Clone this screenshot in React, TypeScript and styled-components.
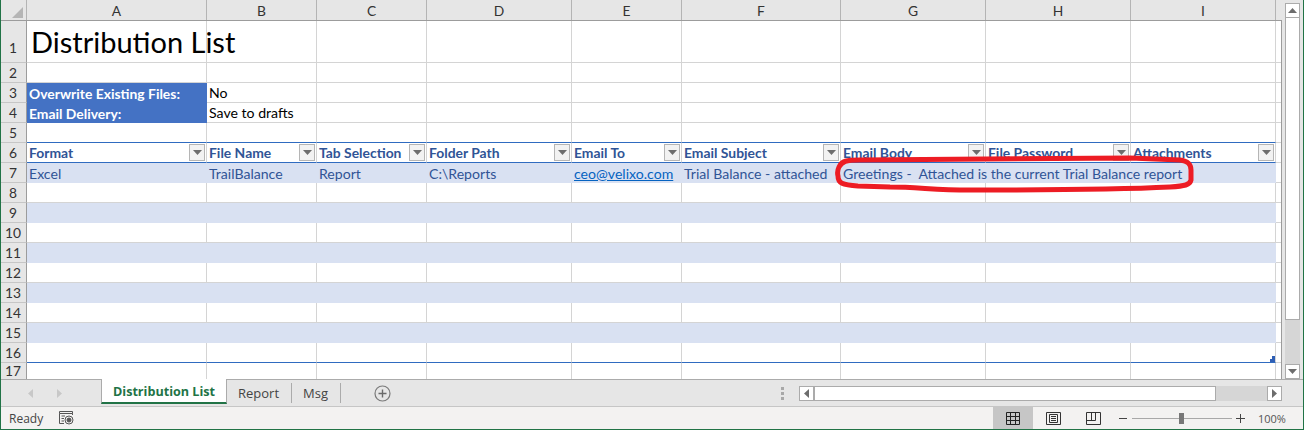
import React from "react";
import styled, { createGlobalStyle } from "styled-components";

const CELL_FONT = `"Lato", "Liberation Sans", sans-serif`;
const UI_FONT = `"Open Sans", "Noto Sans", sans-serif`;
const COLS = "26px 180px 110px 110px 145px 110px 159px 145px 145px 145px 5px";

const GlobalStyle = createGlobalStyle`
  html, body {
    margin: 0;
    padding: 0;
    overflow: hidden;
    background: #e6e6e6;
  }
`;

const LETTERS = ["A", "B", "C", "D", "E", "F", "G", "H", "I"];
const HEADERS = [
  "Format",
  "File Name",
  "Tab Selection",
  "Folder Path",
  "Email To",
  "Email Subject",
  "Email Body",
  "File Password",
  "Attachments",
];
const FIRST_ROW = [
  "Excel",
  "TrailBalance",
  "Report",
  "C:\\Reports",
  "ceo@velixo.com",
  "Trial Balance - attached",
  "Greetings -  Attached is the current Trial Balance report",
  "",
  "",
];

const App = () => {
  return (
    <Frame>
      <GlobalStyle />
      <Workspace>
        <Sheet>
          <ColumnHeaderRow>
            <Corner>
              <svg width="13" height="13" viewBox="0 0 13 13">
                <path d="M12 1V12H1Z" fill="#b5b5b5" />
              </svg>
            </Corner>
            {LETTERS.map((l) => (
              <ColumnLetter key={l}>{l}</ColumnLetter>
            ))}
            <div />
          </ColumnHeaderRow>

          <Row $height={42}>
            <RowNumber $tall>1</RowNumber>
            <Cell>
              <Title>Distribution List</Title>
            </Cell>
            {LETTERS.slice(1).map((l) => (
              <Cell key={l} />
            ))}
            <EdgeCell />
          </Row>

          <PlainRow n={2} />

          <Row $height={20}>
            <RowNumber>3</RowNumber>
            <LabelCell>Overwrite Existing Files:</LabelCell>
            <Cell>No</Cell>
            {LETTERS.slice(2).map((l) => (
              <Cell key={l} />
            ))}
            <EdgeCell />
          </Row>
          <Row $height={20}>
            <RowNumber>4</RowNumber>
            <LabelCell>Email Delivery:</LabelCell>
            <Cell>Save to drafts</Cell>
            {LETTERS.slice(2).map((l) => (
              <Cell key={l} />
            ))}
            <EdgeCell />
          </Row>

          <PlainRow n={5} blueBottom />

          <Row $height={20}>
            <RowNumber>6</RowNumber>
            {HEADERS.map((h) => (
              <TableHeadCell key={h}>
                <span>{h}</span>
                <FilterButton>
                  <svg width="9" height="5" viewBox="0 0 9 5">
                    <path d="M0 0H9L4.5 5Z" fill="#6d6d6d" />
                  </svg>
                </FilterButton>
              </TableHeadCell>
            ))}
            <EdgeCell />
          </Row>

          <Row $height={20}>
            <RowNumber>7</RowNumber>
            {FIRST_ROW.map((v, i) => (
              <BandCell key={i} $over={v.length > 30}>
                {v.includes("@") ? <MailLink>{v}</MailLink> : v}
              </BandCell>
            ))}
            <EdgeCell />
          </Row>

          {[8, 9, 10, 11, 12, 13, 14, 15, 16].map((n) =>
            n % 2 === 1 ? (
              <Row key={n} $height={20}>
                <RowNumber>{n}</RowNumber>
                {LETTERS.map((l) => (
                  <BandCell key={l} />
                ))}
                <EdgeCell />
              </Row>
            ) : (
              <PlainRow key={n} n={n} blueBottom={n === 16} handle={n === 16} />
            )
          )}
          <PlainRow n={17} short />

          <Highlight width="370" height="50" viewBox="0 0 370 50">
            <path
              d="M9 17C12 11 16 10 30 10C100 10 200 8 300 8L350 10C358 11 361 14 361 20L361 30C360 35 355 36 340 37C280 40 180 40 150 40C110 41 90 37 60 37L28 36C12 35 8 33 8 26C7 22 8 19 9 17Z"
              fill="none"
              stroke="#ed1c24"
              strokeWidth="5"
            />
          </Highlight>
        </Sheet>

        <VerticalBar>
          <ScrollButton>
            <svg width="9" height="5" viewBox="0 0 9 5">
              <path d="M0 5H9L4.5 0Z" fill="#6d6d6d" />
            </svg>
          </ScrollButton>
          <VerticalThumb />
          <VerticalTrack />
          <ScrollButton>
            <svg width="9" height="5" viewBox="0 0 9 5">
              <path d="M0 0H9L4.5 5Z" fill="#6d6d6d" />
            </svg>
          </ScrollButton>
        </VerticalBar>
      </Workspace>

      <TabBar>
        <TabNav>
          <svg width="5" height="9" viewBox="0 0 5 9">
            <path d="M5 0V9L0 4.5Z" fill="#c8c8c8" />
          </svg>
          <svg width="5" height="9" viewBox="0 0 5 9">
            <path d="M0 0V9L5 4.5Z" fill="#c8c8c8" />
          </svg>
        </TabNav>
        <ActiveTab>Distribution List</ActiveTab>
        <Tab>Report</Tab>
        <Tab>Msg</Tab>
        <AddSheet>
          <svg width="17" height="17" viewBox="0 0 17 17">
            <circle cx="8.5" cy="8.5" r="7.5" fill="none" stroke="#7a7a7a" strokeWidth="1.2" />
            <path d="M8.5 4.5V12.5M4.5 8.5H12.5" stroke="#6a6a6a" strokeWidth="1.4" />
          </svg>
        </AddSheet>
        <Dots>
          <i />
          <i />
          <i />
        </Dots>
        <HorizontalBar>
          <ScrollButton>
            <svg width="5" height="9" viewBox="0 0 5 9">
              <path d="M5 0V9L0 4.5Z" fill="#6d6d6d" />
            </svg>
          </ScrollButton>
          <HorizontalThumb />
          <HorizontalTrack />
          <ScrollButton>
            <svg width="5" height="9" viewBox="0 0 5 9">
              <path d="M0 0V9L5 4.5Z" fill="#6d6d6d" />
            </svg>
          </ScrollButton>
        </HorizontalBar>
      </TabBar>

      <StatusBar>
        <ReadyText>Ready</ReadyText>
        <MacroIcon>
          <svg width="15" height="14" viewBox="0 0 15 14" fill="none" stroke="#555">
            <path d="M0.5 0.5H13.5V2.5H0.5Z" />
            <path d="M0.5 2.5V12.5H5M13.5 2.5V4" />
            <path d="M2.5 5H6M2.5 7.5H5M2.5 10H5" />
            <circle cx="10" cy="9" r="4" />
            <circle cx="10" cy="9" r="2" fill="#555" />
          </svg>
        </MacroIcon>
        <Spacer />
        <ViewButton $active>
          <svg width="14" height="13" viewBox="0 0 14 13" fill="none" stroke="#222">
            <path d="M0.5 0.5H13.5V12.5H0.5ZM0.5 4.5H13.5M0.5 8.5H13.5M4.5 0.5V12.5M9.5 0.5V12.5" />
          </svg>
        </ViewButton>
        <ViewButton>
          <svg width="15" height="13" viewBox="0 0 15 13" fill="none" stroke="#333">
            <path d="M0.5 0.5H14.5V12.5H0.5ZM3.5 2.5H11.5V10.5H3.5ZM5 4.5H10M5 6.5H10M5 8.5H10" />
          </svg>
        </ViewButton>
        <ViewButton>
          <svg width="15" height="13" viewBox="0 0 15 13" fill="none" stroke="#333">
            <path d="M0.5 0.5H14.5V12.5H0.5ZM0.5 8.5H9.5V0.5M5.5 0.5V8.5" />
          </svg>
        </ViewButton>
        <ZoomBox>
          <ZoomSign>
            <svg width="9" height="9" viewBox="0 0 9 9">
              <path d="M0 4.5H8" stroke="#444" strokeWidth="1" />
            </svg>
          </ZoomSign>
          <ZoomTrack>
            <ZoomThumb />
          </ZoomTrack>
          <ZoomSign>
            <svg width="9" height="9" viewBox="0 0 9 9">
              <path d="M0 4.5H9M4.5 0V9" stroke="#444" strokeWidth="1" />
            </svg>
          </ZoomSign>
          <ZoomValue>100%</ZoomValue>
        </ZoomBox>
      </StatusBar>
    </Frame>
  );
};

const PlainRow = ({
  n,
  blueBottom,
  handle,
  short,
}: {
  n: number;
  blueBottom?: boolean;
  handle?: boolean;
  short?: boolean;
}) => (
  <Row $height={short ? 16 : 20}>
    <RowNumber>{n}</RowNumber>
    {LETTERS.map((l) => (
      <Cell key={l} $blue={blueBottom}>
        {handle && l === "I" ? (
          <ResizeHandle width="5" height="6" viewBox="0 0 5 6">
            <path d="M5 0V6H0V3H2V0Z" fill="#2f5fb5" />
          </ResizeHandle>
        ) : null}
      </Cell>
    ))}
    <EdgeCell />
  </Row>
);

const Frame = styled.div`
  width: 1304px;
  height: 430px;
  box-sizing: border-box;
  border-left: 1px solid #217346;
  border-right: 1px solid #217346;
  border-bottom: 1px solid #217346;
  background: #e6e6e6;
  display: flex;
  flex-direction: column;
  overflow: hidden;
`;

const Workspace = styled.div`
  height: 380px;
  flex: none;
  display: flex;
  box-sizing: border-box;
  border-bottom: 1px solid #ababab;
`;

const Sheet = styled.div`
  position: relative;
  width: 1281px;
  flex: none;
  box-sizing: border-box;
  overflow: hidden;
  font-family: ${CELL_FONT};
  font-size: 14.1px;
  color: #000;
`;

const ColumnHeaderRow = styled.div`
  display: grid;
  grid-template-columns: ${COLS};
  height: 21px;
  box-sizing: border-box;
  background: #e6e6e6;
  border-bottom: 1px solid #9c9c9c;
`;

const Corner = styled.div`
  display: flex;
  align-items: flex-end;
  justify-content: flex-end;
  padding: 0 2px 1px 0;
  border-right: 1px solid #b4b4b4;
  box-sizing: border-box;
`;

const ColumnLetter = styled.div`
  display: flex;
  align-items: center;
  justify-content: center;
  box-sizing: border-box;
  border-right: 1px solid #b4b4b4;
  font-size: 13.8px;
  color: #333;
`;

const Row = styled.div<{ $height: number }>`
  display: grid;
  grid-template-columns: ${COLS};
  height: ${(p) => p.$height}px;
  box-sizing: border-box;
  background: #fff;
  border-right: 1px solid #9c9c9c;
`;

const RowNumber = styled.div<{ $tall?: boolean }>`
  display: flex;
  align-items: center;
  justify-content: center;
  box-sizing: border-box;
  background: #e6e6e6;
  border-right: 1px solid #9c9c9c;
  border-bottom: 1px solid #c6c6c6;
  padding-top: ${(p) => (p.$tall ? "13px" : "0")};
  padding-right: 1px;
  font-size: 13.8px;
  line-height: 16px;
  color: #333;
`;

const Cell = styled.div<{ $blue?: boolean }>`
  position: relative;
  display: flex;
  align-items: center;
  box-sizing: border-box;
  padding-left: 2px;
  white-space: pre;
  border-right: 1px solid #d4d4d4;
  border-bottom: 1px solid ${(p) => (p.$blue ? "#2f6bc0" : "#d4d4d4")};
`;

const EdgeCell = styled.div`
  box-sizing: border-box;
  border-bottom: 1px solid #d4d4d4;
`;

const Title = styled.div`
  font-size: 29px;
  line-height: 36px;
  padding-left: 2px;
  color: #000;
`;

const LabelCell = styled.div`
  display: flex;
  align-items: center;
  box-sizing: border-box;
  padding-left: 2px;
  background: #4472c4;
  color: #fff;
  font-weight: 700;
  font-size: 13.9px;
  white-space: pre;
`;

const TableHeadCell = styled.div`
  position: relative;
  display: flex;
  align-items: center;
  justify-content: space-between;
  box-sizing: border-box;
  padding: 0 1px 0 2px;
  border-right: 1px solid #d4d4d4;
  border-bottom: 1px solid #2f6bc0;
  font-weight: 700;
  font-size: 13.9px;
  color: #305496;
  white-space: pre;
`;

const FilterButton = styled.div`
  width: 16px;
  height: 17px;
  box-sizing: border-box;
  display: flex;
  align-items: center;
  justify-content: center;
  background: #f2f2f2;
  border: 1px solid #b5b5b5;
`;

const BandCell = styled.div<{ $over?: boolean }>`
  position: relative;
  z-index: ${(p) => (p.$over ? 1 : 0)};
  display: flex;
  align-items: center;
  box-sizing: border-box;
  padding-left: 2px;
  background: #d9e1f2;
  color: #305496;
  white-space: pre;
`;

const MailLink = styled.span`
  color: #0563c1;
  text-decoration: underline;
`;

const ResizeHandle = styled.svg`
  position: absolute;
  right: 0;
  bottom: 0;
`;

const Highlight = styled.svg`
  position: absolute;
  z-index: 2;
  left: 829px;
  top: 150px;
`;

const VerticalBar = styled.div`
  width: 15px;
  margin: 3px 0 0 3px;
  display: flex;
  flex-direction: column;
  height: 376px;
`;

const ScrollButton = styled.div`
  flex: none;
  width: 15px;
  height: 15px;
  box-sizing: border-box;
  display: flex;
  align-items: center;
  justify-content: center;
  background: #fff;
  border: 1px solid #ababab;
`;

const VerticalThumb = styled.div`
  height: 302px;
  flex: none;
  box-sizing: border-box;
  background: #fff;
  border: 1px solid #ababab;
  border-top: 0;
`;

const VerticalTrack = styled.div`
  flex: 1;
  background: #d6d6d6;
`;

const TabBar = styled.div`
  height: 27px;
  flex: none;
  display: flex;
  align-items: stretch;
  box-sizing: border-box;
  border-bottom: 1px solid #c6c6c6;
  font-family: ${UI_FONT};
  font-size: 13px;
`;

const TabNav = styled.div`
  width: 100px;
  flex: none;
  display: flex;
  align-items: center;
  gap: 24px;
  padding: 0 0 0 27px;
  box-sizing: border-box;
`;

const ActiveTab = styled.div`
  width: 126px;
  height: 25px;
  margin-top: -1px;
  padding-top: 1px;
  flex: none;
  box-sizing: border-box;
  display: flex;
  align-items: center;
  justify-content: center;
  background: #fff;
  border-left: 1px solid #ababab;
  border-right: 1px solid #ababab;
  border-bottom: 2px solid #217346;
  color: #217346;
  font-size: 12.6px;
  font-weight: 700;
`;

const Tab = styled.div`
  height: 20px;
  margin-top: 3px;
  flex: none;
  display: flex;
  align-items: center;
  padding: 0 12px 0 11px;
  border-right: 1px solid #ababab;
  color: #444;
`;

const AddSheet = styled.div`
  margin-left: 33px;
  display: flex;
  align-items: center;
  flex: none;
  width: 17px;
`;

const Dots = styled.div`
  margin-left: 390px;
  width: 3px;
  flex: none;
  display: flex;
  flex-direction: column;
  justify-content: center;
  gap: 2px;

  i {
    display: block;
    width: 3px;
    height: 3px;
    background: #a8a8a8;
  }
`;

const HorizontalBar = styled.div`
  margin: 6px 0 0 15px;
  width: 483px;
  height: 15px;
  flex: none;
  display: flex;
`;

const HorizontalThumb = styled.div`
  width: 402px;
  flex: none;
  box-sizing: border-box;
  background: #fff;
  border: 1px solid #ababab;
`;

const HorizontalTrack = styled.div`
  flex: 1;
  background: #d6d6d6;
`;

const StatusBar = styled.div`
  flex: 1;
  display: flex;
  align-items: stretch;
  background: #f3f2f1;
  font-family: ${UI_FONT};
  font-size: 12px;
  color: #444;
`;

const ReadyText = styled.div`
  margin-left: 8px;
  width: 50px;
  display: flex;
  align-items: center;
`;

const MacroIcon = styled.div`
  display: flex;
  align-items: center;
`;

const Spacer = styled.div`
  flex: 1;
`;

const ViewButton = styled.div<{ $active?: boolean }>`
  width: 40px;
  flex: none;
  display: flex;
  align-items: center;
  justify-content: center;
  background: ${(p) => (p.$active ? "#c6c6c6" : "transparent")};
`;

const ZoomBox = styled.div`
  width: 190px;
  flex: none;
  display: flex;
  align-items: center;
  padding-left: 6px;
  box-sizing: border-box;
`;

const ZoomSign = styled.div`
  display: flex;
  width: 9px;
  flex: none;
`;

const ZoomTrack = styled.div`
  position: relative;
  width: 100px;
  height: 1px;
  margin: 0 4px;
  flex: none;
  background: #a8a8a8;
`;

const ZoomThumb = styled.div`
  position: absolute;
  left: 47px;
  top: -5px;
  width: 5px;
  height: 11px;
  background: #777;
`;

const ZoomValue = styled.div`
  margin-left: 13px;
  font-size: 11px;
  color: #555;
`;

export default App;
